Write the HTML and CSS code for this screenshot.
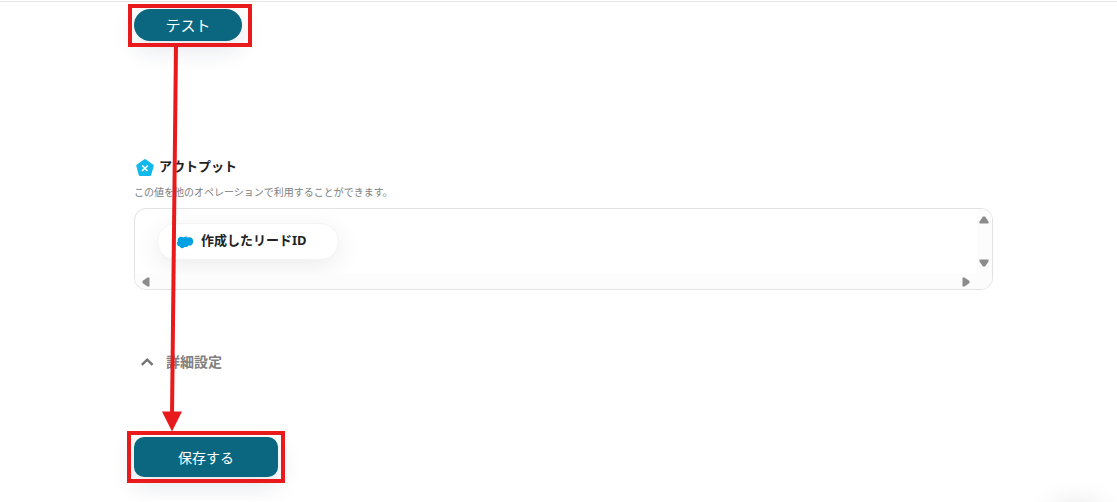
FILE: index.html
```html
<!DOCTYPE html>
<html lang="ja">
<head>
<meta charset="utf-8">
<meta name="viewport" content="width=device-width, initial-scale=1">
<title>アウトプット</title>
<link rel="stylesheet" href="styles.css">
</head>
<body>
<main class="panel">
  <button class="btn btn-test" type="button">テスト</button>

  <section class="output">
    <h2 class="output-title">
      <svg class="output-icon" viewBox="0 0 20 20" aria-hidden="true">
        <path d="M11 3 18.800 8.500 16.200 18H5.800L3.200 8.500Z" fill="#12b8ea" stroke="#12b8ea" stroke-width="2" stroke-linejoin="round"/>
        <path d="M8.200 8.500 13.400 14M13.800 8.500 8 14" fill="none" stroke="#fff" stroke-width="1.700"/>
      </svg>
      <span>アウトプット</span>
    </h2>
    <p class="output-note">この値を他のオペレーションで利用することができます。</p>
    <div class="output-box">
      <div class="output-content">
        <span class="chip">
          <svg class="chip-icon" viewBox="0 0 18 14" aria-hidden="true">
            <path d="M7.600 2.500C9 1.200 11 1.400 11.800 2.700c2.800-1.100 5.400.7 5.400 3.700 0 2.900-2.400 4.600-4.800 4.100-.8 1.400-2.400 1.900-3.700 1.300-1 2-4.100 1.900-4.800-.4C1.200 11.700-.1 7.800 1.800 6.500.7 2.300 5 .4 7.600 2.500Z" fill="#00a1e0"/>
          </svg>
          <span class="chip-label">作成したリードID</span>
        </span>
      </div>
      <div class="bar bar-vertical">
        <svg class="bar-arrow" viewBox="0 0 10 8" aria-hidden="true"><path d="M4 .5H6L9.500 5.500V7.500H.5V5.500Z"/></svg>
        <svg class="bar-arrow" viewBox="0 0 10 8" aria-hidden="true"><path d="M4 7.500H6L9.500 2.500V.5H.5V2.500Z"/></svg>
      </div>
      <div class="bar bar-horizontal">
        <svg class="bar-arrow-side" viewBox="0 0 8 10" aria-hidden="true"><path d="M.5 4V6L5.500 9.500H7.500V.5H5.500Z"/></svg>
        <svg class="bar-arrow-side" viewBox="0 0 8 10" aria-hidden="true"><path d="M7.500 4V6L2.500 9.500H.5V.5H2.500Z"/></svg>
      </div>
    </div>
  </section>

  <button class="settings" type="button">
    <svg class="settings-icon" viewBox="0 0 14 10" aria-hidden="true"><path d="M1.800 7.800 7.200 2.600 12.600 7.800" fill="none" stroke="#747474" stroke-width="2.400"/></svg>
    <span>詳細設定</span>
  </button>

  <button class="btn btn-save" type="button">保存する</button>
</main>
<div class="float-shadow"></div>

<svg class="guide" width="160" height="482" viewBox="0 0 160 482" aria-hidden="true">
  <g fill="none" stroke="#e81a1c" stroke-width="4">
    <rect x="3" y="4" width="120" height="39"/>
    <rect x="2" y="431" width="154" height="48"/>
    <path d="M49 43 45 414"/>
  </g>
  <path d="M35 409.500H55L45 429.500Z" fill="#e81a1c"/>
</svg>
</body>
</html>
```
FILE: styles.css
```css
* {
  box-sizing: border-box;
}

body {
  margin: 1px 0 0;
  border-top: 1px solid #e2e3e5;
  background: #fff;
  color: #222;
  font-family: "Noto Sans", "Noto Sans CJK JP", sans-serif;
  overflow: hidden;
  position: relative;
}

.panel {
  display: flex;
  flex-direction: column;
  align-items: flex-start;
  padding: 7px 124px 24px 134px;
}

.btn {
  border: 0;
  background: #0b6780;
  color: #fff;
  font-family: inherit;
  padding: 0;
  box-shadow: 0 8px 24px rgba(30, 50, 90, 0.13);
}

.btn-test {
  width: 108px;
  height: 32px;
  padding-bottom: 2px;
  border-radius: 16px;
  font-size: 15px;
}

.btn-save {
  width: 144px;
  height: 40px;
  margin-top: 63px;
  border-radius: 10px;
  font-size: 14px;
}

.output {
  align-self: stretch;
  margin-top: 114px;
}

.output-title {
  display: flex;
  align-items: center;
  gap: 5px;
  margin: 0;
  height: 24px;
  font-size: 13px;
  font-weight: 700;
}

.output-title span,
.chip-label {
  padding-bottom: 4px;
}

.output-icon {
  width: 20px;
  height: 20px;
}

.output-note {
  margin: 5px 0 8px;
  font-size: 10px;
  line-height: 16px;
  color: #808080;
}

.output-box {
  display: grid;
  grid-template-columns: 1fr 15px;
  grid-template-rows: 65px 15px;
  border: 1px solid #e2e2e2;
  border-radius: 12px;
  overflow: hidden;
}

.output-content {
  padding: 14px 22px;
  overflow: hidden;
}

.chip {
  display: inline-flex;
  align-items: center;
  gap: 7px;
  width: 182px;
  height: 37px;
  padding-left: 18px;
  border: 1px solid #f3f3f3;
  border-radius: 19px;
  background: #fff;
  box-shadow: 0 6px 24px rgba(0, 0, 0, 0.08);
  font-size: 13px;
  font-weight: 700;
}

.chip-icon {
  width: 18px;
  height: 14px;
}

.bar {
  display: flex;
  justify-content: space-between;
  align-items: center;
  background: #fcfcfc;
}

.bar svg {
  fill: #8b8b8b;
}

.bar-vertical {
  flex-direction: column;
  padding: 7px 1px 7px 0;
}

.bar-horizontal {
  grid-column: 1 / 3;
  padding: 0 22px 0 7px;
}

.bar-arrow {
  width: 10px;
  height: 8px;
}

.bar-arrow-side {
  width: 8px;
  height: 10px;
}

.settings {
  display: flex;
  align-items: center;
  gap: 12px;
  height: 24px;
  margin-top: 60px;
  padding: 0 0 0 6px;
  border: 0;
  background: none;
  color: #808080;
  font-family: inherit;
  font-size: 14px;
  font-weight: 700;
}

.settings span {
  padding-bottom: 2px;
}

.settings-icon {
  width: 14px;
  height: 10px;
}

.guide {
  position: absolute;
  left: 127px;
  top: 0;
}

.float-shadow {
  position: fixed;
  right: 12px;
  bottom: -60px;
  width: 56px;
  height: 56px;
  border-radius: 50%;
  box-shadow: 0 0 32px rgba(0, 0, 0, 0.14);
}
```
